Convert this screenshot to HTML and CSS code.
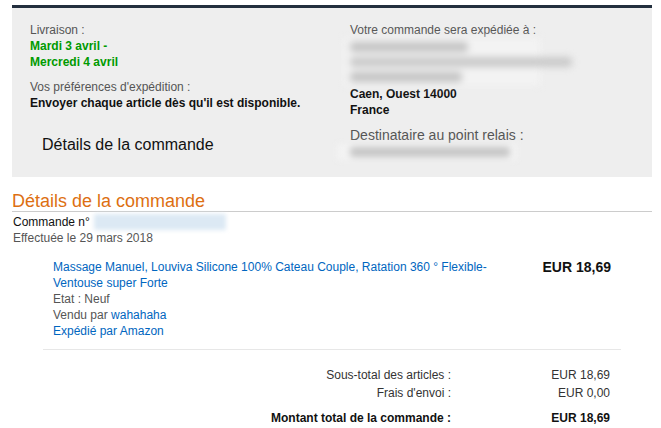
FILE: index.html
```html
<!DOCTYPE html>
<html lang="fr">
<head>
<meta charset="utf-8">
<title>Détails de la commande</title>
<link rel="stylesheet" href="styles.css">
</head>
<body>
<div class="page">
  <section class="ship-box">
    <div class="col col-left">
      <div class="label">Livraison :</div>
      <div class="green">Mardi 3 avril -</div>
      <div class="green">Mercredi 4 avril</div>
      <div class="pref">
        <div class="label">Vos préférences d'expédition :</div>
        <div class="strong">Envoyer chaque article dès qu'il est disponible.</div>
      </div>
      <div class="box-title">Détails de la commande</div>
    </div>
    <div class="col col-right">
      <div class="label">Votre commande sera expédiée à :</div>
      <div class="addr-blur">
        <div class="bar bar-1"></div>
        <div class="bar bar-2"></div>
        <div class="bar bar-3"></div>
      </div>
      <div class="strong">Caen, Ouest 14000</div>
      <div class="strong">France</div>
      <div class="relay-label">Destinataire au point relais :</div>
      <div class="relay-blur"><div class="bar bar-4"></div></div>
    </div>
  </section>

  <h2 class="section-title">Détails de la commande</h2>
  <div class="order-info">
    <div class="dark">Commande n°<span class="order-blur"></span></div>
    <div class="label">Effectuée le 29 mars 2018</div>
  </div>

  <div class="item">
    <div class="item-info">
      <div class="link">Massage Manuel, Louviva Silicone 100% Cateau Couple, Ratation 360 ° Flexible-Ventouse super Forte</div>
      <div class="label">Etat : Neuf</div>
      <div class="label">Vendu par <span class="link">wahahaha</span></div>
      <div class="link">Expédié par Amazon</div>
    </div>
    <div class="item-price">EUR 18,69</div>
  </div>

  <div class="totals">
    <div class="t-label">Sous-total des articles :</div>
    <div class="t-value">EUR 18,69</div>
    <div class="t-label">Frais d'envoi :</div>
    <div class="t-value">EUR 0,00</div>
    <div class="t-label grand">Montant total de la commande :</div>
    <div class="t-value grand">EUR 18,69</div>
  </div>
</div>
</body>
</html>
```
FILE: styles.css
```css
* { box-sizing: border-box; }
html, body { margin: 0; padding: 0; background: #fff; }
body {
  font-family: "Liberation Sans", Arial, sans-serif;
  font-size: 12px;
  line-height: 16px;
  color: #111;
}
.page {
  width: 661px;
  padding: 5px 9px 0 12px;
}
.ship-box {
  height: 172px;
  border-top: 3px solid #232f3e;
  background: #eeeeee;
  display: grid;
  grid-template-columns: 338px 1fr;
}
.col-left { padding: 14px 0 0 18px; }
.col-right { padding: 14px 0 0 0; }
.label { color: #555; }
.dark { color: #111; }
.strong { font-weight: bold; color: #111; }
.green { color: #009a00; font-weight: bold; }
.pref { margin-top: 9px; }
.box-title {
  margin-top: 24px;
  padding-left: 12px;
  font-size: 16px;
  line-height: 20px;
  color: #111;
}
.addr-blur {
  height: 48px;
  width: 196px;
  margin-left: -6px;
  padding: 4px 0 0 6px;
  background: #f3f3f3;
  filter: blur(3.5px);
  display: flex;
  flex-direction: column;
  gap: 5px;
}
.bar { height: 10px; background: #c4c4c4; border-radius: 4px; }
.bar-1 { width: 118px; }
.bar-2 { width: 222px; background: #cacaca; }
.bar-3 { width: 112px; }
.relay-label {
  margin-top: 8px;
  font-size: 14px;
  line-height: 18px;
  color: #555;
}
.relay-blur {
  height: 16px;
  width: 180px;
  margin-left: -13px;
  padding: 3px 0 0 13px;
  background: #f3f3f3;
  filter: blur(3px);
}
.bar-4 { width: 160px; background: #c6c6c6; }

.section-title {
  margin: 15px 0 0 0;
  font-size: 18px;
  line-height: 19px;
  font-weight: normal;
  color: #dd6f12;
  border-bottom: 1px solid #cccccc;
}
.order-info { padding: 2px 0 0 1px; }
.order-blur {
  display: inline-block;
  width: 132px;
  height: 16px;
  margin-left: 4px;
  vertical-align: top;
  background: #dce9f4;
  filter: blur(2px);
}
.item {
  margin: 13px 31px 0 31px;
  padding: 0 10px 10px 10px;
  border-bottom: 1px solid #e7e7e7;
  display: flex;
}
.item-info { width: 470px; }
.link { color: #0066c0; }
.item-price {
  margin-left: auto;
  font-size: 14px;
  font-weight: bold;
  color: #111;
}
.totals {
  margin-top: 16px;
  display: grid;
  grid-template-columns: 439px 159px;
  line-height: 18px;
}
.t-label { text-align: right; color: #333; }
.t-value { text-align: right; color: #333; }
.grand { font-weight: bold; color: #111; margin-top: 7px; }
```
